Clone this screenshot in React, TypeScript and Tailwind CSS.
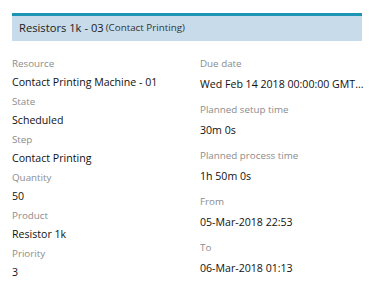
const LEFT = [
  ['Resource', 'Contact Printing Machine - 01'],
  ['State', 'Scheduled'],
  ['Step', 'Contact Printing'],
  ['Quantity', '50'],
  ['Product', 'Resistor 1k'],
  ['Priority', '3'],
]

const RIGHT = [
  ['Due date', 'Wed Feb 14 2018 00:00:00 GMT...'],
  ['Planned setup time', '30m 0s'],
  ['Planned process time', '1h 50m 0s'],
  ['From', '05-Mar-2018 22:53'],
  ['To', '06-Mar-2018 01:13'],
]

export default function App() {
  return (
    <div
      className="w-[374px] h-[297px] bg-white pt-[13px] px-[12px]"
      style={{ fontFamily: '"Open Sans", "Liberation Sans", sans-serif' }}
    >
      {/* Header */}
      <div className="border-t-[3px] border-[#1b95b3] bg-[#c7dbea] h-[28px] flex items-center pl-[7px]">
        <span className="text-[11.2px] text-[#222]">Resistors 1k - 03</span>
        <span className="text-[9.8px] text-[#333] ml-[2px]">(Contact Printing)</span>
      </div>

      {/* Details */}
      <div className="grid grid-cols-[188px_1fr] mt-[13px]">
        <div className="flex flex-col">
          {LEFT.map(([label, value]) => (
            <div key={label}>
              <div className="text-[9.8px] leading-[19px] text-[#8c8c8c]">{label}</div>
              <div className="text-[10.6px] leading-[19px] text-[#111]">{value}</div>
            </div>
          ))}
        </div>
        <div className="flex flex-col min-w-0">
          {RIGHT.map(([label, value]) => (
            <div key={label} className="mb-[6px]">
              <div className="text-[9.8px] leading-[20px] text-[#8c8c8c]">{label}</div>
              <div className="text-[10.6px] leading-[20px] text-[#111] whitespace-nowrap">{value}</div>
            </div>
          ))}
        </div>
      </div>
    </div>
  )
}
